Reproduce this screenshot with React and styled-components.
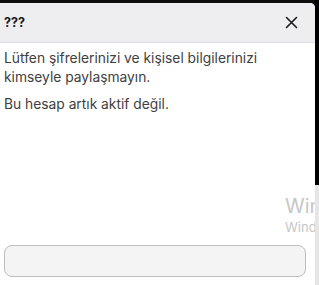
import React from "react";
import styled, { createGlobalStyle } from "styled-components";

const GlobalStyle = createGlobalStyle`
  html, body {
    margin: 0;
    padding: 0;
    background: #0d0d0d;
    overflow: hidden;
  }
  body {
    font-family: Inter, "Noto Sans", sans-serif;
  }
`;

const Screen = styled.div`
  display: grid;
  grid-template-columns: 315px 4px;
  width: 319px;
  height: 285px;
`;

const Dialog = styled.div`
  position: relative;
  margin-top: 3px;
  height: 282px;
  background: #ffffff;
  border-top-right-radius: 5px;
  display: flex;
  flex-direction: column;
  overflow: hidden;
`;

const Header = styled.div`
  height: 39px;
  flex-shrink: 0;
  display: flex;
  align-items: center;
  justify-content: space-between;
  padding: 0 17px 0 4px;
  background: #eeeef0;
  border-bottom: 1px solid #dcdcdf;
`;

const Title = styled.span`
  font-size: 12.5px;
  font-weight: 700;
  color: #1a1a1a;
`;

const CloseButton = styled.button`
  border: 0;
  background: none;
  padding: 0;
  width: 14px;
  height: 14px;
  display: flex;
  align-items: center;
  justify-content: center;
  cursor: pointer;
`;

const Body = styled.div`
  flex: 1;
  display: flex;
  flex-direction: column;
  padding: 6px 9px 8px 4px;
`;

const Message = styled.p`
  margin: 0 0 8px;
  font-size: 13.8px;
  line-height: 19px;
  color: #404040;
`;

const Field = styled.input`
  margin-top: auto;
  height: 32px;
  box-sizing: border-box;
  width: 100%;
  border: 1px solid #bdbdbd;
  border-radius: 8px;
  background: #f4f4f4;
  outline: none;
`;

const Watermark = styled.div`
  position: absolute;
  left: 285px;
  top: 190px;
  width: 30px;
  overflow: hidden;
  color: #c6c6c6;
  white-space: nowrap;
  pointer-events: none;
`;

const WatermarkTitle = styled.div`
  font-size: 20px;
  line-height: 26px;
`;

const WatermarkSub = styled.div`
  font-size: 13px;
  line-height: 16px;
`;

const Strip = styled.div`
  display: flex;
  flex-direction: column;
`;

const StripPart = styled.div`
  height: ${(p) => p.$h};
  flex: ${(p) => (p.$h ? "none" : 1)};
  background: ${(p) => p.$bg};
`;

export default function App() {
  return (
    <>
      <GlobalStyle />
      <Screen>
        <Dialog>
          <Header>
            <Title>???</Title>
            <CloseButton aria-label="Kapat">
              <svg width="13" height="13" viewBox="0 0 13 13">
                <path d="M1.5 1.5 L11.5 11.5 M11.5 1.5 L1.5 11.5" stroke="#1a1a1a" strokeWidth="1.6" strokeLinecap="round" />
              </svg>
            </CloseButton>
          </Header>
          <Body>
            <Message>Lütfen şifrelerinizi ve kişisel bilgilerinizi kimseyle paylaşmayın.</Message>
            <Message>Bu hesap artık aktif değil.</Message>
            <Field />
          </Body>
          <Watermark>
            <WatermarkTitle>Windows</WatermarkTitle>
            <WatermarkSub>Windows</WatermarkSub>
          </Watermark>
        </Dialog>
        <Strip>
          <StripPart $h="185px" $bg="#000000" />
          <StripPart $bg="#e6e6e6" />
        </Strip>
      </Screen>
    </>
  );
}
